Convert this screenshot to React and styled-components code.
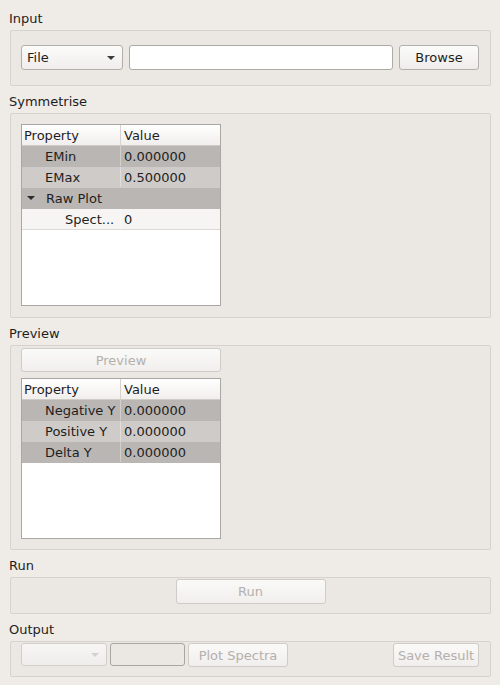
import React from "react";
import styled, { createGlobalStyle, css } from "styled-components";

const Global = createGlobalStyle`
  html, body { margin: 0; padding: 0; background: #efebe7; }
  body { font-family: "DejaVu Sans", "Liberation Sans", sans-serif; font-size: 13px; color: #1e1e1e; }
  * { box-sizing: border-box; }
`;

const Page = styled.div`
  width: 500px;
  height: 685px;
  padding: 11px 9px 0 10px;
  display: flex;
  flex-direction: column;
  gap: 8px;
`;

const Section = styled.section`
  display: flex;
  flex-direction: column;
  gap: 3px;
`;

const Label = styled.div`
  height: 16px;
  line-height: 16px;
  margin-left: -1px;
`;

const Group = styled.div`
  border: 1px solid #d6d2ce;
  border-radius: 2px;
  background: #ebe8e4;
  height: ${(p) => p.$h}px;
  padding: ${(p) => p.$pad};
  display: flex;
  flex-direction: ${(p) => (p.$col ? "column" : "row")};
  align-items: ${(p) => p.$align || "flex-start"};
  justify-content: ${(p) => p.$justify || "flex-start"};
  gap: ${(p) => p.$gap || 0}px;
`;

const Combo = styled.div`
  width: ${(p) => p.$w}px;
  height: ${(p) => p.$h}px;
  flex: none;
  border: 1px solid ${(p) => (p.$disabled ? "#d2ceca" : "#b3afab")};
  border-radius: 3px;
  background: ${(p) => (p.$disabled ? "linear-gradient(#f7f6f5, #efedeb)" : "linear-gradient(#fbfbfa, #f0eeec)")};
  display: flex;
  align-items: center;
  justify-content: space-between;
  padding: 0 7px 0 5px;
  line-height: 1;
`;

const Arrow = styled.span`
  flex: none;
  width: 0;
  height: 0;
  border-left: 4px solid transparent;
  border-right: 4px solid transparent;
  border-top: 4px solid ${(p) => p.$c || "#3c3c3c"};
`;

const LineEdit = styled.div`
  height: ${(p) => p.$h}px;
  ${(p) => (p.$w ? css`width: ${p.$w}px; flex: none;` : css`flex: 1;`)}
  border: 1px solid ${(p) => (p.$disabled ? "#a9a5a1" : "#aeaaa6")};
  border-radius: 3px;
  background: ${(p) => (p.$disabled ? "#ebe8e4" : "#ffffff")};
`;

const Button = styled.button`
  font: inherit;
  width: ${(p) => p.$w}px;
  height: ${(p) => p.$h}px;
  flex: none;
  border: 1px solid ${(p) => (p.$disabled ? "#cfcbc7" : "#b3afab")};
  border-radius: 3px;
  background: ${(p) => (p.$disabled ? "linear-gradient(#fafaf9, #f1efed)" : "linear-gradient(#fbfbfa, #efedeb)")};
  color: ${(p) => (p.$disabled ? "#b4b0ac" : "#1e1e1e")};
  padding: 0;
  line-height: 1;
  display: flex;
  align-items: center;
  justify-content: center;
`;

const Tree = styled.div`
  width: 200px;
  height: ${(p) => p.$h}px;
  flex: none;
  border: 1px solid #a9a6a3;
  background: #ffffff;
  display: flex;
  flex-direction: column;
`;

const Row = styled.div`
  display: grid;
  grid-template-columns: ${(p) => (p.$span ? "1fr" : "99px 1fr")};
  height: 21px;
  flex: none;
  background: ${(p) =>
    p.$tone === "header"
      ? "linear-gradient(#ffffff, #f1efed)"
      : p.$tone === "dark"
      ? "#bab6b3"
      : p.$tone === "mid"
      ? "#cfcbc8"
      : "#f6f5f3"};
  border-bottom: 1px solid ${(p) => (p.$tone === "header" ? "#cfcbc7" : p.$tone === "light" ? "#dcd9d6" : "transparent")};
`;

const Cell = styled.div`
  display: flex;
  align-items: center;
  white-space: nowrap;
  overflow: hidden;
  padding-left: ${(p) => p.$indent || 2}px;
  gap: ${(p) => p.$gap || 6}px;
  ${(p) =>
    p.$first &&
    css`
      border-right: 1px solid ${p.$header ? "#d6d3cf" : "rgba(255,255,255,0.35)"};
    `}
`;

const PropRow = ({ tone, name, value, indent = 23 }) => (
  <Row $tone={tone}>
    <Cell $first $indent={indent}>{name}</Cell>
    <Cell $indent={3}>{value}</Cell>
  </Row>
);

const GroupRow = ({ name }) => (
  <Row $tone="dark" $span>
    <Cell $indent={5} $gap={11}>
      <Arrow $c="#2a2a2a" />
      {name}
    </Cell>
  </Row>
);

const Header = () => (
  <Row $tone="header">
    <Cell $first $header>Property</Cell>
    <Cell $indent={3}>Value</Cell>
  </Row>
);

const Spacer = styled.div`
  flex: 1;
`;

export default function App() {
  return (
    <>
      <Global />
      <Page>
        <Section>
          <Label>Input</Label>
          <Group $h={56} $pad="14px 11px 14px 10px" $gap={6}>
            <Combo $w={102} $h={25}>
              <span>File</span>
              <Arrow />
            </Combo>
            <LineEdit $h={25} />
            <Button $w={80} $h={25}>Browse</Button>
          </Group>
        </Section>

        <Section>
          <Label>Symmetrise</Label>
          <Group $h={205} $pad="10px 10px" $col>
            <Tree $h={182}>
              <Header />
              <PropRow tone="dark" name="EMin" value="0.000000" />
              <PropRow tone="mid" name="EMax" value="0.500000" />
              <GroupRow name="Raw Plot" />
              <PropRow tone="light" name="Spect..." value="0" indent={43} />
            </Tree>
          </Group>
        </Section>

        <Section>
          <Label>Preview</Label>
          <Group $h={205} $pad="2px 10px" $col $gap={6}>
            <Button $w={200} $h={24} $disabled>Preview</Button>
            <Tree $h={161}>
              <Header />
              <PropRow tone="dark" name="Negative Y" value="0.000000" />
              <PropRow tone="mid" name="Positive Y" value="0.000000" />
              <PropRow tone="dark" name="Delta Y" value="0.000000" />
            </Tree>
          </Group>
        </Section>

        <Section>
          <Label>Run</Label>
          <Group $h={37} $pad="1px 10px" $justify="center">
            <Button $w={150} $h={25} $disabled>Run</Button>
          </Group>
        </Section>

        <Section>
          <Label>Output</Label>
          <Group $h={36} $pad="1px 11px 1px 10px" $gap={3}>
            <Combo $w={86} $h={23} $disabled>
              <span />
              <Arrow $c="#d4d0cc" />
            </Combo>
            <LineEdit $w={75} $h={23} $disabled />
            <Button $w={100} $h={24} $disabled>Plot Spectra</Button>
            <Spacer />
            <Button $w={86} $h={24} $disabled>Save Result</Button>
          </Group>
        </Section>
      </Page>
    </>
  );
}
